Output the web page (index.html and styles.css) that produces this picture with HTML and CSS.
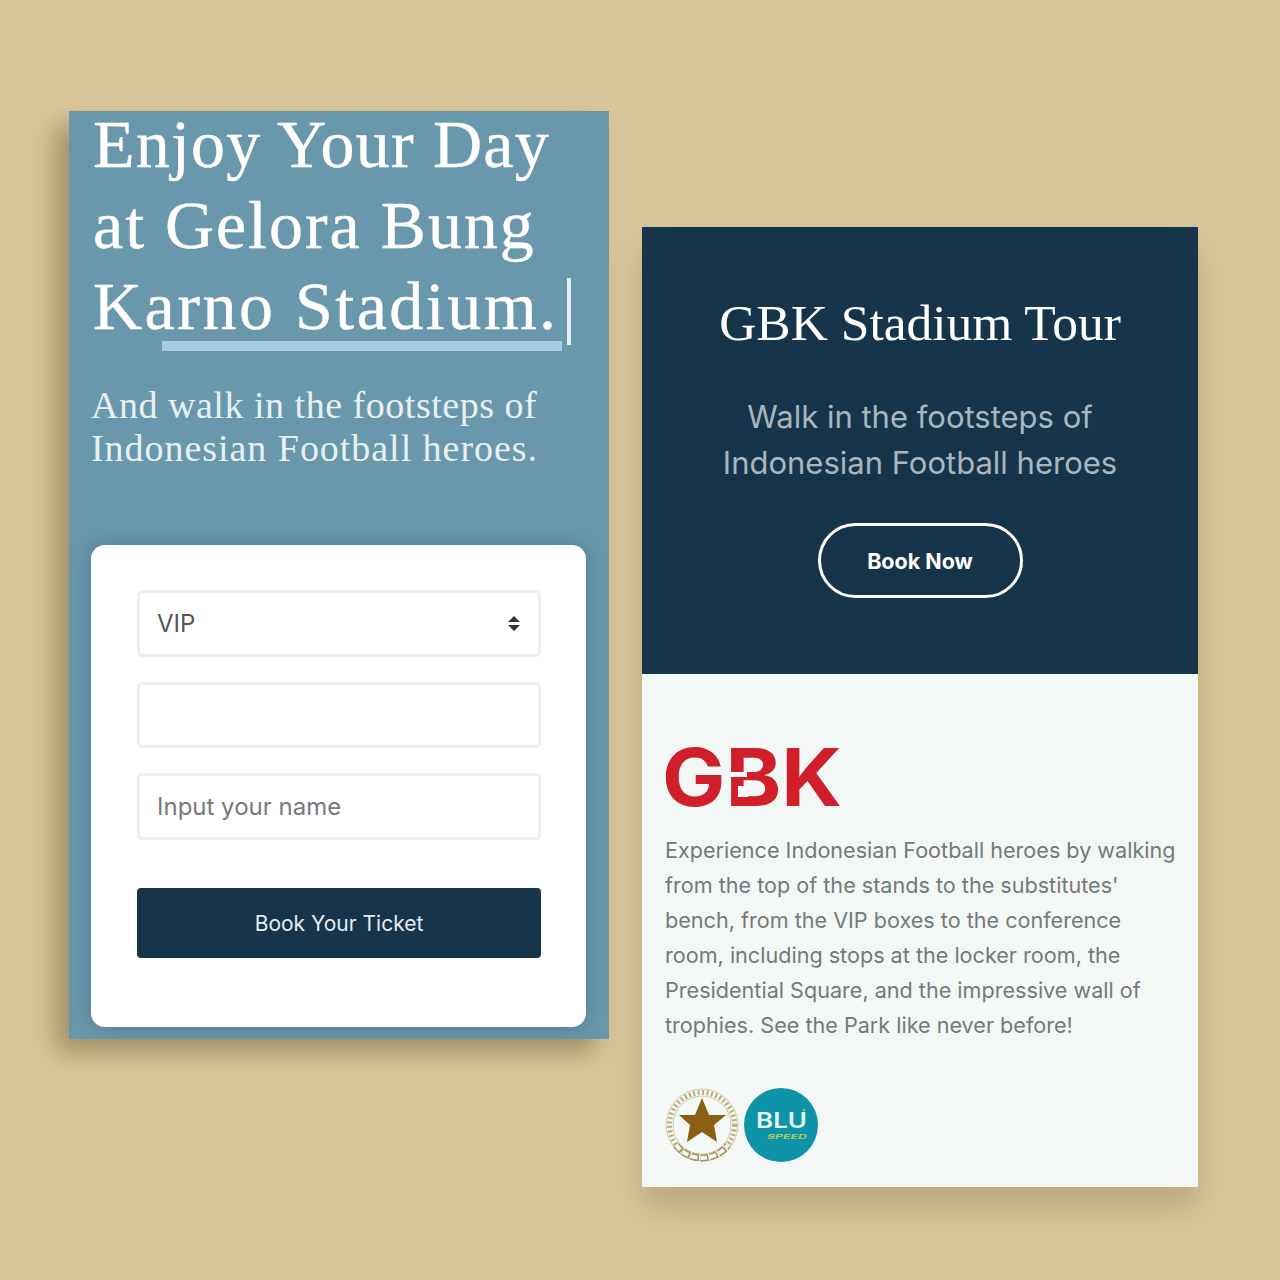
FILE: index.html
```html
<!DOCTYPE html>
<html lang="en">
<head>
    <meta charset="UTF-8">
    <title>GBK Stadium Tour</title>
    <link rel="stylesheet" href="styles.css">
</head>
<body>
    <div class="page">
        <!-- Booking screen -->
        <section class="booking">
            <h1 class="hero-title">
                <span class="line">Enjoy Your Day</span>
                <span class="line line-two">at Gelora Bung</span>
                <span class="line line-three">Ka<span class="mark">rno Stadium.</span><span class="caret"></span></span>
            </h1>
            <p class="hero-sub"><span class="sub-one">And walk in the footsteps of</span><br><span class="sub-two">Indonesian Football heroes.</span></p>

            <form class="ticket-form">
                <div class="field field-select">
                    <span>VIP</span>
                    <svg class="sort" width="12" height="15" viewBox="0 0 12 15"><path d="M6 0 12 6H0zM6 15 0 9H12z" fill="#333"/></svg>
                </div>
                <div class="field"></div>
                <div class="field field-hint">Input your name</div>
                <button class="submit" type="button">Book Your Ticket</button>
            </form>
        </section>

        <!-- Tour screen -->
        <section class="tour">
            <div class="tour-head">
                <h2>GBK Stadium Tour</h2>
                <p>Walk in the footsteps of<br>Indonesian Football heroes</p>
                <button class="book-now" type="button">Book Now</button>
            </div>
            <div class="tour-body">
                <svg class="gbk" width="184" height="100" viewBox="-4 0 184 100">
                    <text x="-3" y="79" textLength="180" lengthAdjust="spacingAndGlyphs" class="gbk-text">GBK</text>
                    <rect x="58" y="45" width="24" height="5" fill="#f3f8f6"/>
                    <rect x="73" y="59" width="10" height="11" fill="#f3f8f6"/>
                </svg>
                <p>Experience Indonesian Football heroes by walking<br>from the top of the stands to the substitutes'<br>bench, from the VIP boxes to the conference<br>room, including stops at the locker room, the<br>Presidential Square, and the impressive wall of<br>trophies. See the Park like never before!</p>
                <div class="partners">
                    <svg width="74" height="74" viewBox="0 0 74 74">
                        <circle cx="37" cy="37" r="36" fill="none" stroke="#d6cba8" stroke-width="1"/>
                        <circle cx="37" cy="37" r="29" fill="none" stroke="#d6cba8" stroke-width="1"/>
                        <circle cx="37" cy="37" r="32.500" fill="none" stroke="#bfae7e" stroke-width="5" stroke-dasharray="2 2.500"/>
                        <path d="M11 57A32.500 32.500 0 0 0 63 57" fill="none" stroke="#a8935a" stroke-width="7" stroke-dasharray="8 1.500"/>
                        <path d="M11 57A32.500 32.500 0 0 0 63 57" fill="none" stroke="#f3f8f6" stroke-width="4" stroke-dasharray="6.500 3"/>
                        <path d="M37 10 44 27H61L49 37 52 54 37 44 22 54 25 37 14 27H30Z" fill="#8a5f12"/>
                    </svg>
                    <svg width="74" height="74" viewBox="0 0 74 74">
                        <circle cx="37" cy="37" r="37" fill="#0f93a8"/>
                        <text x="12" y="40" textLength="51" lengthAdjust="spacingAndGlyphs" class="blu-text">BLU</text>
                        <circle cx="60" cy="22" r="1.200" fill="#9ccb4e"/>
                        <text x="23" y="51" textLength="40" lengthAdjust="spacingAndGlyphs" class="speed-text">SPEED</text>
                    </svg>
                </div>
            </div>
        </section>
    </div>
</body>
</html>
```

FILE: styles.css
```css
* {
    box-sizing: border-box;
}
body {
    margin: 0;
    background-color: #d9c698;
    font-family: Inter, sans-serif;
}
.page {
    display: flex;
    align-items: flex-start;
    gap: 33px;
    height: 1280px;
    padding-left: 69px;
}

/* left screen */
.booking {
    width: 540px;
    height: 928px;
    margin-top: 111px;
    padding: 0 22px;
    background-color: #6998ac;
    box-shadow: -14px 14px 24px rgba(80, 70, 40, 0.4);
}
.hero-title {
    margin: -7px 0 0 2px;
    font-family: "Liberation Serif", serif;
    font-size: 68px;
    font-weight: 400;
    line-height: 81px;
    letter-spacing: 1.2px;
    color: #fff;
    white-space: nowrap;
    -webkit-text-stroke: 0.4px #fff;
}
.line {
    display: block;
}
.line-two {
    letter-spacing: 1.95px;
}
.line-three {
    letter-spacing: 2.5px;
}
.mark {
    position: relative;
}
.mark::after {
    content: "";
    position: absolute;
    left: -15px;
    right: -3px;
    bottom: -7px;
    height: 10px;
    background-color: #a6cce2;
}
.caret {
    display: inline-block;
    width: 4px;
    height: 67px;
    margin-left: 8px;
    background-color: #e6f0f4;
    vertical-align: -16px;
}
.hero-sub {
    margin: 37px 0 0;
    font-family: "Liberation Serif", serif;
    font-size: 38px;
    line-height: 43px;
    color: #e8f0f2;
    white-space: nowrap;
}
.sub-one {
    letter-spacing: 0.52px;
}
.sub-two {
    letter-spacing: 0.96px;
}
.ticket-form {
    display: flex;
    flex-direction: column;
    gap: 25px;
    width: 495px;
    height: 482px;
    margin-top: 75px;
    padding: 45px 45px 0 46px;
    background-color: #fff;
    border-radius: 14px;
    box-shadow: 0 0 22px rgba(40, 70, 90, 0.35);
}
.field {
    display: flex;
    align-items: center;
    justify-content: space-between;
    height: 66.500px;
    padding: 0 18px 0 17px;
    border: 3px solid #eeeff0;
    border-radius: 5px;
    font-size: 24px;
    color: #555;
}
.field-hint {
    color: #75797c;
}
.submit {
    height: 70px;
    margin-top: 23.500px;
    background-color: #17354a;
    color: #e6ecef;
    border: none;
    border-radius: 4px;
    font-family: Inter, sans-serif;
    font-size: 21px;
}

/* right screen */
.tour {
    width: 556px;
    height: 960px;
    margin-top: 227px;
    box-shadow: 0 22px 30px rgba(80, 70, 40, 0.22);
}
.tour-head {
    display: flex;
    flex-direction: column;
    align-items: center;
    height: 447px;
    padding-top: 64px;
    background-color: #17354a;
    text-align: center;
}
.tour-head h2 {
    margin: 0;
    font-family: "Liberation Serif", serif;
    font-size: 51.500px;
    font-weight: 400;
    line-height: 64px;
    color: #fff;
}
.tour-head p {
    margin: 38.500px 0 0;
    font-size: 31px;
    line-height: 46px;
    color: #a9b6bf;
}
.book-now {
    width: 205px;
    height: 75px;
    margin-top: 37.500px;
    background: none;
    color: #fff;
    border: 3px solid #fff;
    border-radius: 38px;
    font-family: Inter, sans-serif;
    font-size: 21.500px;
    font-weight: 700;
}
.tour-body {
    height: 513px;
    padding: 73px 23px 0;
    background-color: #f3f8f6;
}
.gbk {
    display: block;
    margin: -20px 0 -18px -4px;
}
.gbk-text {
    font-family: Inter, sans-serif;
    font-size: 80px;
    font-weight: 700;
    fill: #d01f2a;
}
.tour-body p {
    margin: 23.500px 0 0;
    font-size: 21.600px;
    line-height: 35px;
    color: #75797a;
    white-space: nowrap;
}
.partners {
    display: flex;
    gap: 5px;
    margin-top: 45.500px;
}
.blu-text {
    font-family: Inter, sans-serif;
    font-size: 21px;
    font-weight: 600;
    fill: #e6f7f4;
}
.speed-text {
    font-family: Inter, sans-serif;
    font-size: 6px;
    font-style: italic;
    font-weight: 700;
    fill: #a9d15c;
}
```
